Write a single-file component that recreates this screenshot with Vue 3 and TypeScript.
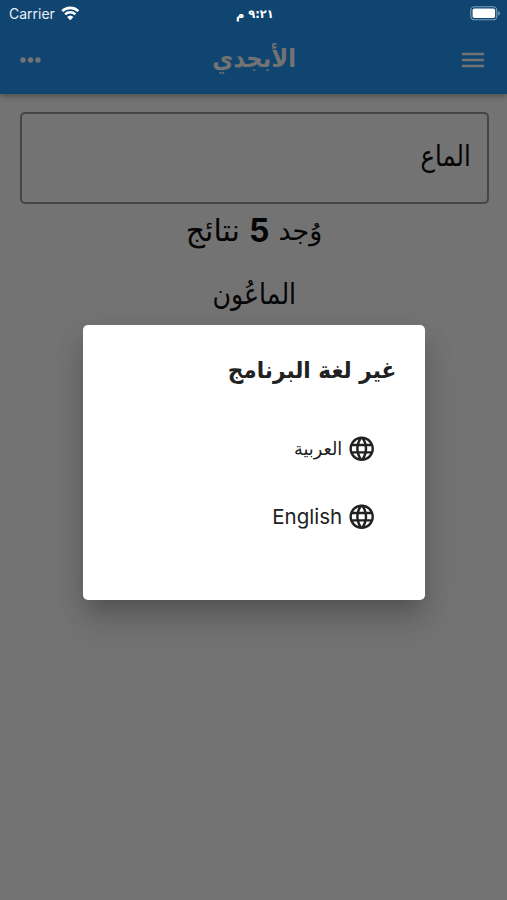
<script setup lang="ts">
interface Language {
  code: string
  label: string
}

const query = 'الماع'
const resultCount = 5
const results: string[] = ['الماعُون']
const languages: Language[] = [
  { code: 'ar', label: 'العربية' },
  { code: 'en', label: 'English' },
]
</script>

<template>
  <div class="screen" dir="rtl">
    <header class="app-bar">
      <svg class="menu" viewBox="0 0 24 16"><path d="M1 1.9h22M1 8h22M1 14.1h22" /></svg>
      <h1><span class="fit app-name">الأبجدي</span></h1>
      <svg class="more" viewBox="0 0 22 6">
        <circle cx="3" cy="3" r="2.7" /><circle cx="10.5" cy="3" r="2.7" /><circle cx="18" cy="3" r="2.7" />
      </svg>
    </header>
    <main>
      <div class="search"><span class="fit query">{{ query }}</span></div>
      <p class="count"><span class="found">وُجد</span><b>{{ resultCount }}</b><span class="unit">نتائج</span></p>
      <p v-for="r in results" :key="r" class="result"><span class="fit word">{{ r }}</span></p>
    </main>

    <div class="scrim">
      <section class="dialog" role="dialog">
        <h2><span class="fit heading">غير لغة البرنامج</span></h2>
        <ul>
          <li v-for="l in languages" :key="l.code">
            <svg class="globe" viewBox="0 0 24 24"><path d="M11.99 2C6.47 2 2 6.48 2 12s4.47 10 9.99 10C17.52 22 22 17.52 22 12S17.52 2 11.99 2zm6.93 6h-2.95c-.32-1.25-.78-2.45-1.38-3.56 1.84.63 3.37 1.91 4.33 3.56zM12 4.04c.83 1.2 1.48 2.53 1.91 3.96h-3.82c.43-1.43 1.08-2.76 1.91-3.96zM4.26 14C4.1 13.36 4 12.69 4 12s.1-1.36.26-2h3.38c-.08.66-.14 1.32-.14 2 0 .68.06 1.34.14 2H4.26zm.82 2h2.95c.32 1.25.78 2.45 1.38 3.56-1.84-.63-3.37-1.9-4.33-3.56zm2.95-8H5.08c.96-1.66 2.49-2.93 4.33-3.56C8.81 5.55 8.35 6.75 8.03 8zM12 19.96c-.83-1.2-1.48-2.53-1.91-3.96h3.82c-.43 1.43-1.08 2.76-1.91 3.96zM14.34 14H9.66c-.09-.66-.16-1.32-.16-2 0-.68.07-1.35.16-2h4.68c.09.65.16 1.32.16 2 0 .68-.07 1.34-.16 2zm.25 5.56c.6-1.11 1.06-2.31 1.38-3.56h2.95c-.96 1.65-2.49 2.93-4.33 3.56zM16.36 14c.08-.66.14-1.32.14-2 0-.68-.06-1.34-.14-2h3.38c.16.64.26 1.31.26 2s-.1 1.36-.26 2h-3.38z" /></svg>
            <span class="fit" :class="l.code">{{ l.label }}</span>
          </li>
        </ul>
      </section>
    </div>

    <div class="status" dir="ltr">
      <div class="carrier">
        <span>Carrier</span>
        <svg class="wifi" viewBox="0 0 18 14">
          <path d="M1.2 5a11.2 11.2 0 0 1 15.6 0M4 8.1a7.2 7.2 0 0 1 10 0" />
          <path class="dot" d="M9 13.8l-3.1-3.1a4.5 4.5 0 0 1 6.2 0z" />
        </svg>
      </div>
      <span class="clock" dir="rtl">٩:٢١ م</span>
      <svg class="battery" viewBox="0 0 31 15">
        <rect class="case" x=".8" y=".8" width="26" height="13" rx="3.6" />
        <rect class="level" x="2.6" y="2.5" width="22.5" height="9.6" rx="1.8" />
        <path class="tip" d="M28.2 4.9v4.8q1.7-.7 1.7-2.4t-1.7-2.4z" />
      </svg>
    </div>
  </div>
</template>

<style scoped>
.screen {
  position: relative;
  height: 900px;
  overflow: hidden;
  background: #fafafa;
  font-family: 'DejaVu Sans', sans-serif;
  color: #0c0c0c;
}
h1, h2, p, ul { margin: 0; padding: 0; font-size: inherit; }
.fit { display: inline-block; white-space: nowrap; transform-origin: right center; }
.app-bar {
  display: flex;
  align-items: center;
  justify-content: space-between;
  box-sizing: border-box;
  height: 94px;
  padding: 26px 22px 0 20px;
  background: #2196f3;
  box-shadow: 0 2px 5px rgba(0, 0, 0, .25), 0 4px 6px rgba(0, 0, 0, .08);
}
.menu { width: 24px; height: 16px; stroke: #fafafa; stroke-width: 2.5; }
.more { width: 22px; height: 6px; fill: #fafafa; }
h1 { height: 32px; display: flex; align-items: center; color: #fafafa; }
.app-name { font-size: 25px; font-weight: 700; transform: translate(-2px, -2px) scaleX(.91); }
main { padding: 18px 18.5px 0 19.5px; }
.search {
  display: flex;
  align-items: center;
  box-sizing: border-box;
  height: 92px;
  padding: 0 16px 5px;
  border: 2px solid #979797;
  border-radius: 5px;
}
.query { font-size: 29px; transform: scaleX(.84); }
.count, .result { display: flex; justify-content: center; align-items: center; }
.count { height: 52px; font-size: 29px; gap: 9px; }
.count b { font-family: Inter, sans-serif; font-size: 32px; }
.found { font-size: 27px; }
.unit { font-size: 30px; }
.result { height: 76px; font-size: 29px; }
.word { transform: translateX(-6px) scaleX(.87); }
.scrim {
  position: absolute;
  inset: 0;
  display: flex;
  justify-content: center;
  align-items: flex-start;
  padding-top: 325px;
  background: rgba(0, 0, 0, .54);
}
.dialog {
  box-sizing: border-box;
  width: 342px;
  height: 275px;
  padding: 20px 28px;
  border-radius: 5px;
  background: #fff;
  box-shadow: 0 13px 18px -8px rgba(0, 0, 0, .15), 0 24px 34px 0 rgba(0, 0, 0, .13), 0 8px 30px 2px rgba(0, 0, 0, .07);
  color: #212121;
}
h2 { height: 50px; display: flex; align-items: center; }
.heading { font-size: 23px; font-weight: 700; transform: scaleX(.94); }
ul { padding: 19px 20px 0 0; list-style: none; }
li { display: flex; align-items: center; gap: 5px; height: 68.5px; }
.globe { width: 29.4px; height: 29.4px; fill: #212121; }
.ar { font-size: 18px; transform: scaleX(.98); }
.en { font-family: Inter, sans-serif; font-size: 20.5px; }
.status {
  position: absolute;
  inset: 0 0 auto;
  display: grid;
  grid-template-columns: 1fr auto 1fr;
  align-items: center;
  height: 27px;
  padding: 0 6px 0 9px;
  color: #e9f0f6;
  font-family: Inter, 'DejaVu Sans', sans-serif;
  font-size: 14px;
}
.carrier { display: flex; align-items: center; gap: 6px; }
.wifi { width: 18.5px; height: 14.4px; fill: none; stroke: #fff; stroke-width: 2.5; }
.wifi .dot { fill: #fff; stroke: none; }
.clock { font-family: 'DejaVu Sans', sans-serif; font-weight: 700; font-size: 12px; color: #fff; transform: scaleX(.95); }
.battery { width: 31px; height: 15px; justify-self: end; }
.case { fill: none; stroke: #7da0bd; stroke-width: 1.1; }
.level { fill: #fff; }
.tip { fill: #7da0bd; }
</style>

<style>
body { margin: 0; }
</style>
